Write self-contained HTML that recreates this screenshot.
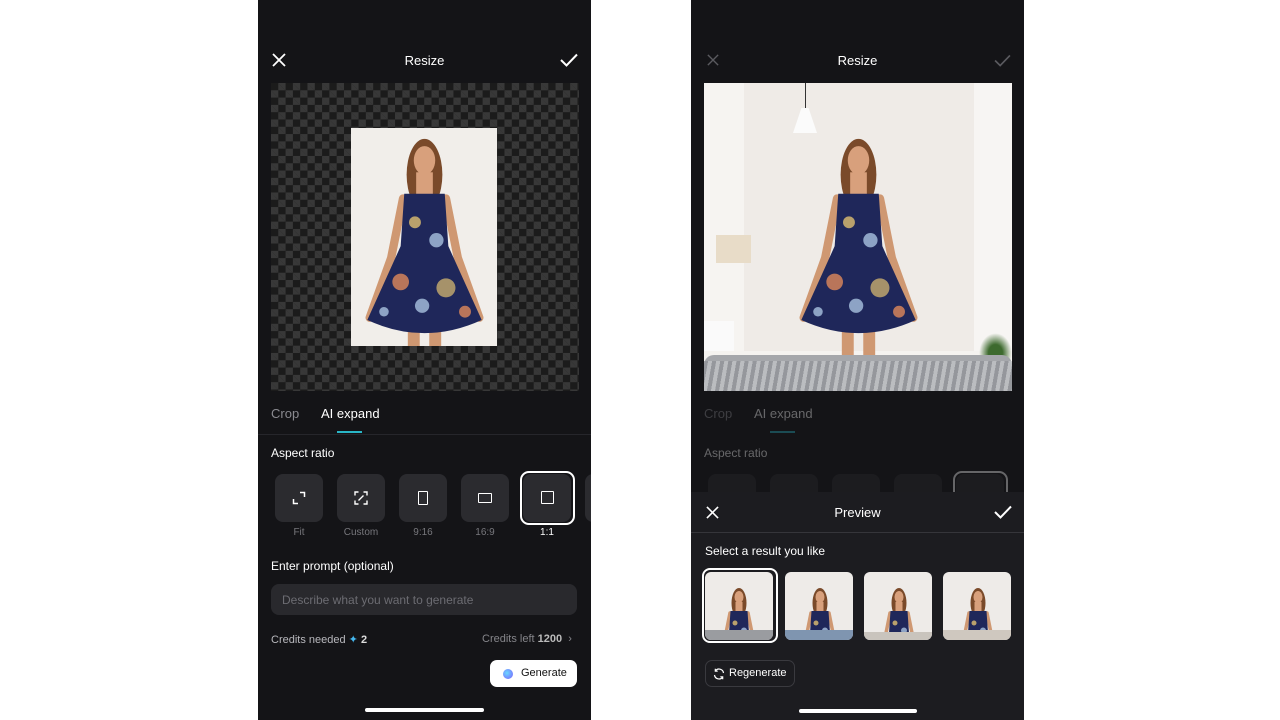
<!DOCTYPE html>
<html><head><meta charset="utf-8"><style>
*{margin:0;padding:0;box-sizing:border-box}
body{width:1280px;height:720px;background:#fff;position:relative;overflow:hidden;font-family:"Liberation Sans",sans-serif;color:#fff}
.ph{position:absolute;top:0;width:333px;height:720px;background:#141417;overflow:hidden}
.a{position:absolute}
.t{position:absolute;white-space:nowrap}
.check{background-color:#1b1b1b;background-image:linear-gradient(45deg,#383838 25%,transparent 25%,transparent 75%,#383838 75%),linear-gradient(45deg,#383838 25%,transparent 25%,transparent 75%,#383838 75%);background-size:14.6px 14.6px;background-position:0 0,7.3px 7.3px}
.tile{position:absolute;top:474px;width:48px;height:48px;border-radius:8px;background:#2b2b2f}
.lbl{position:absolute;top:527px;width:48px;text-align:center;font-size:10px;color:#77777c}
.th{position:absolute;top:572px;width:68px;height:68px;border-radius:6px;overflow:hidden;background:#eeebe8}
</style></head><body>
<svg width="0" height="0" style="position:absolute">
<defs>
<symbol id="w" viewBox="0 0 140 240">
<ellipse cx="70" cy="40" rx="15" ry="30" fill="#7a4a2a"/>
<ellipse cx="70" cy="28" rx="9" ry="12" fill="#d8a07c"/>
<rect x="63" y="38" width="14" height="22" fill="#d8a07c"/>
<path d="M52 60 L42 110 L24 160" stroke="#cf9872" stroke-width="7" fill="none" stroke-linecap="round"/>
<path d="M88 60 L98 110 L116 160" stroke="#cf9872" stroke-width="7" fill="none" stroke-linecap="round"/>
<rect x="56" y="170" width="10" height="60" fill="#cf9872"/>
<rect x="74" y="170" width="10" height="60" fill="#cf9872"/>
<path d="M53 56 L87 56 L90 100 L118 162 Q70 184 22 162 L50 100 Z" fill="#1f275a"/>
<circle cx="62" cy="80" r="5" fill="#e0c070" opacity=".8"/>
<circle cx="80" cy="95" r="6" fill="#a9c3e0" opacity=".8"/>
<circle cx="50" cy="130" r="7" fill="#e08a5a" opacity=".8"/>
<circle cx="88" cy="135" r="8" fill="#e0c070" opacity=".7"/>
<circle cx="68" cy="150" r="6" fill="#a9c3e0" opacity=".8"/>
<circle cx="104" cy="155" r="5" fill="#e08a5a" opacity=".8"/>
<circle cx="36" cy="155" r="4" fill="#a9c3e0" opacity=".8"/>
</symbol>
</defs></svg>

<!-- LEFT PHONE -->
<div class="ph" style="left:258px">
  <svg class="a" style="left:14px;top:53px" width="14" height="14" viewBox="0 0 14 14"><path d="M1 1L13 13M13 1L1 13" stroke="#fff" stroke-width="1.8"/></svg>
  <div class="t" style="left:0;width:333px;text-align:center;top:53px;font-size:13px">Resize</div>
  <svg class="a" style="left:302px;top:53px" width="18" height="14" viewBox="0 0 18 14"><path d="M1 7L6.5 12.5L17 1.5" stroke="#fff" stroke-width="2" fill="none"/></svg>
  <div class="a check" style="left:13px;top:83px;width:308px;height:308px"></div>
  <div class="a" style="left:93px;top:128px;width:146px;height:218px;background:#f1eeea;overflow:hidden">
    <svg class="a" style="left:-10px;top:-1px" width="167" height="286"><use href="#w"/></svg>
  </div>
  <div class="t" style="left:13px;top:406px;font-size:13px;color:#8a8a90">Crop</div>
  <div class="t" style="left:63px;top:406px;font-size:13px;color:#fff">AI expand</div>
  <div class="a" style="left:79px;top:431px;width:25px;height:2px;background:#29b6c6"></div>
  <div class="a" style="left:0;top:434px;width:333px;height:1px;background:#26262b"></div>
  <div class="t" style="left:13px;top:446px;font-size:12px">Aspect ratio</div>
  <div class="tile" style="left:17px"></div><div class="tile" style="left:79px"></div><div class="tile" style="left:141px"></div><div class="tile" style="left:203px"></div><div class="tile" style="left:265px"></div><div class="tile" style="left:327px"></div>
  <div class="a" style="left:262px;top:471px;width:55px;height:54px;border:2px solid #fff;border-radius:9px"></div>
  <svg class="a" style="left:34px;top:491px" width="14" height="14" viewBox="0 0 14 14"><path d="M8 1.5H12.5V6M6 12.5H1.5V8" stroke="#fff" stroke-width="1.5" fill="none"/></svg>
  <svg class="a" style="left:96px;top:491px" width="14" height="14" viewBox="0 0 14 14"><path d="M1 4.5V1H4.5M9.5 1H13V4.5M13 9.5V13H9.5M4.5 13H1V9.5M4.5 9.5L9.5 4.5" stroke="#fff" stroke-width="1.4" fill="none"/></svg>
  <div class="a" style="left:160px;top:491px;width:10px;height:14px;border:1.5px solid #fff;border-radius:1px"></div>
  <div class="a" style="left:220px;top:493px;width:14px;height:10px;border:1.5px solid #fff;border-radius:1px"></div>
  <div class="a" style="left:283px;top:491px;width:13px;height:13px;border:1.5px solid #fff;border-radius:1px"></div>
  <div class="lbl" style="left:17px">Fit</div><div class="lbl" style="left:79px">Custom</div><div class="lbl" style="left:141px">9:16</div><div class="lbl" style="left:203px">16:9</div><div class="lbl" style="left:265px;color:#fff">1:1</div>
  <div class="t" style="left:13px;top:559px;font-size:12px">Enter prompt (optional)</div>
  <div class="a" style="left:13px;top:584px;width:306px;height:31px;background:#29292d;border-radius:8px"></div>
  <div class="t" style="left:24px;top:593px;font-size:12px;color:#6c6c72">Describe what you want to generate</div>
  <div class="t" style="left:13px;top:633px;font-size:11px;color:#b8b8bd">Credits needed <span style="color:#45b8f0">✦</span> <b style="color:#ddd">2</b></div>
  <div class="t" style="left:224px;top:633px;font-size:11px;color:#85858a">Credits left <b style="color:#bbb">1200</b> &nbsp;›</div>
  <div class="a" style="left:232px;top:660px;width:87px;height:27px;background:#fff;border-radius:7px"></div>
  <div class="a" style="left:245px;top:669px;width:10px;height:10px;border-radius:50%;background:radial-gradient(circle at 40% 40%,#6ad8ff,#7a5cff)"></div>
  <div class="t" style="left:263px;top:667px;font-size:11px;color:#111">Generate</div>
  <div class="a" style="left:107px;top:708px;width:119px;height:4px;border-radius:2px;background:#fff"></div>
</div>

<!-- RIGHT PHONE -->
<div class="ph" style="left:691px">
  <svg class="a" style="left:16px;top:54px" width="12" height="12" viewBox="0 0 14 14"><path d="M1 1L13 13M13 1L1 13" stroke="#5a5a5f" stroke-width="1.6"/></svg>
  <div class="t" style="left:0;width:333px;text-align:center;top:53px;font-size:13px">Resize</div>
  <svg class="a" style="left:303px;top:54px" width="17" height="13" viewBox="0 0 18 14"><path d="M1 7L6.5 12.5L17 1.5" stroke="#5a5a5f" stroke-width="1.8" fill="none"/></svg>
  <div class="a" style="left:13px;top:83px;width:308px;height:308px;background:#efebe7;overflow:hidden">
    <div class="a" style="left:0;top:0;width:40px;height:308px;background:#f6f4f1"></div>
    <div class="a" style="left:270px;top:0;width:38px;height:308px;background:#f7f5f3"></div>
    <div class="a" style="left:101px;top:0;width:1px;height:25px;background:#333"></div>
    <div class="a" style="left:89px;top:25px;width:24px;height:25px;background:#fbfbfb;clip-path:polygon(35% 0,65% 0,100% 100%,0 100%)"></div>
    <div class="a" style="left:12px;top:152px;width:35px;height:28px;background:#e8dcc8"></div>
    <div class="a" style="left:0;top:238px;width:30px;height:40px;background:#fafafa"></div>
    <div class="a" style="left:0;top:268px;width:308px;height:20px;background:#f5f3f0"></div>
    <div class="a" style="left:275px;top:250px;width:33px;height:40px;background:radial-gradient(ellipse,#3d6a2e 30%,transparent 70%)"></div>
    <svg class="a" style="left:71px;top:44px" width="167" height="286"><use href="#w"/></svg>
    <div class="a" style="left:0;top:272px;width:308px;height:36px;background:#a5a7ab;border-radius:10px 10px 0 0"></div>
    <div class="a" style="left:0;top:278px;width:308px;height:30px;background:repeating-linear-gradient(100deg,#8e9095 0 4px,#c4c6c9 4px 8px);opacity:.7"></div>
  </div>
  <div style="opacity:.35">
    <div class="t" style="left:13px;top:406px;font-size:13px;color:#8a8a90">Crop</div>
    <div class="t" style="left:63px;top:406px;font-size:13px;color:#fff">AI expand</div>
    <div class="a" style="left:79px;top:431px;width:25px;height:2px;background:#29b6c6"></div>
    <div class="t" style="left:13px;top:446px;font-size:12px">Aspect ratio</div>
    <div class="tile" style="left:17px"></div><div class="tile" style="left:79px"></div><div class="tile" style="left:141px"></div><div class="tile" style="left:203px"></div><div class="tile" style="left:265px"></div>
    <div class="a" style="left:262px;top:471px;width:55px;height:54px;border:2px solid #fff;border-radius:9px"></div>
  </div>
  <div class="a" style="left:0;top:492px;width:333px;height:228px;background:#1c1c20"></div>
  <svg class="a" style="left:15px;top:506px" width="13" height="13" viewBox="0 0 14 14"><path d="M1 1L13 13M13 1L1 13" stroke="#fff" stroke-width="1.7"/></svg>
  <div class="t" style="left:0;width:333px;text-align:center;top:505px;font-size:13px">Preview</div>
  <svg class="a" style="left:303px;top:505px" width="18" height="14" viewBox="0 0 18 14"><path d="M1 7L6.5 12.5L17 1.5" stroke="#fff" stroke-width="2" fill="none"/></svg>
  <div class="a" style="left:0;top:532px;width:333px;height:1px;background:#35353a"></div>
  <div class="t" style="left:14px;top:544px;font-size:12px">Select a result you like</div>
  <div class="a" style="left:11px;top:568px;width:76px;height:75px;border:2px solid #fff;border-radius:8px"></div>
  <div class="th" style="left:14px;top:572px"><svg class="a" style="left:-1px;top:11px" width="70" height="120"><use href="#w"/></svg><div class="a" style="left:0;top:58px;width:68px;height:10px;background:#9a9ca0"></div></div>
  <div class="th" style="left:94px"><svg class="a" style="left:0;top:11px" width="70" height="120"><use href="#w"/></svg><div class="a" style="left:0;top:58px;width:68px;height:10px;background:#7f95b0"></div></div>
  <div class="th" style="left:173px"><svg class="a" style="left:0;top:11px" width="70" height="120"><use href="#w"/></svg><div class="a" style="left:0;top:60px;width:68px;height:8px;background:#c9c4bd"></div></div>
  <div class="th" style="left:252px"><svg class="a" style="left:0;top:11px" width="70" height="120"><use href="#w"/></svg><div class="a" style="left:0;top:58px;width:68px;height:10px;background:#cfc8bf"></div></div>
  <div class="a" style="left:14px;top:660px;width:90px;height:27px;border:1px solid #3a3a3f;border-radius:7px"></div>
  <svg class="a" style="left:22px;top:668px" width="12" height="12" viewBox="0 0 12 12"><path d="M10.5 5A4.5 4.5 0 0 0 2.3 3M1.5 7A4.5 4.5 0 0 0 9.7 9M2.3 0.8V3.2H4.7M9.7 11.2V8.8H7.3" stroke="#fff" stroke-width="1.2" fill="none"/></svg>
  <div class="t" style="left:38px;top:667px;font-size:11px">Regenerate</div>
  <div class="a" style="left:108px;top:709px;width:118px;height:4px;border-radius:2px;background:#fff"></div>
</div>
</body></html>
